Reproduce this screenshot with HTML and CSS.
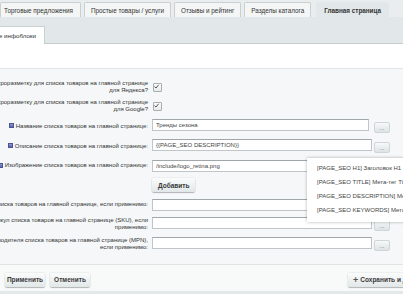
FILE: index.html
```html
<!DOCTYPE html>
<html lang="ru">
<head>
    <meta charset="UTF-8" />
    <meta name="viewport" content="width=device-width, initial-scale=1" />
    <title>Главная страница - настройки</title>
    <link rel="stylesheet" href="styles.css">
</head>
<body>
<div class="tabs">
    <div class="tab">Торговые предложения</div>
    <div class="tab">Простые товары / услуги</div>
    <div class="tab">Отзывы и рейтинг</div>
    <div class="tab">Разделы каталога</div>
    <div class="tab tab-ativa">Главная страница</div>
</div>
<div class="subtabs">
    <div class="subtab"><span>Связанные инфоблоки</span></div>
</div>
<div class="espaco"></div>

<div class="form">
    <div class="linha">
        <div class="rotulo"><span>Использовать микроразметку для списка товаров на главной странице<br>для Яндекса?</span></div>
        <div class="campo"><span class="check"><svg viewBox="0 0 7 7" width="7" height="7"><path d="M1.5 3.6 L3 5 L5.6 1.8" fill="none" stroke="#555" stroke-width="1"/></svg></span></div>
    </div>
    <div class="linha">
        <div class="rotulo"><span>Использовать микроразметку для списка товаров на главной странице<br>для Google?</span></div>
        <div class="campo"><span class="check"><svg viewBox="0 0 7 7" width="7" height="7"><path d="M1.5 3.6 L3 5 L5.6 1.8" fill="none" stroke="#555" stroke-width="1"/></svg></span></div>
    </div>
    <div class="linha">
        <div class="rotulo"><span><i class="dica"></i>Название списка товаров на главной странице:</span></div>
        <div class="campo">
            <div class="input input-curto">Тренды сезона</div>
            <button class="btn-mais">...</button>
        </div>
    </div>
    <div class="linha">
        <div class="rotulo"><span><i class="dica"></i>Описание списка товаров на главной странице:</span></div>
        <div class="campo">
            <div class="input">{{PAGE_SEO DESCRIPTION}}</div>
            <button class="btn-mais">...</button>
        </div>
    </div>
    <div class="linha">
        <div class="rotulo"><span><i class="dica"></i>Изображение списка товаров на главной странице:</span></div>
        <div class="campo">
            <div class="input">/include/logo_retina.png</div>
        </div>
    </div>
    <div class="linha">
        <div class="rotulo"></div>
        <div class="campo"><button class="btn">Добавить</button></div>
    </div>
    <div class="linha">
        <div class="rotulo"><span>Бренд списка товаров на главной странице, если применимо:</span></div>
        <div class="campo">
            <div class="input"></div>
        </div>
    </div>
    <div class="linha">
        <div class="rotulo"><span>Артикул списка товаров на главной странице (SKU), если<br>применимо:</span></div>
        <div class="campo">
            <div class="input"></div>
            <button class="btn-mais">...</button>
        </div>
    </div>
    <div class="linha">
        <div class="rotulo"><span>Код производителя списка товаров на главной странице (MPN),<br>если применимо:</span></div>
        <div class="campo">
            <div class="input"></div>
            <button class="btn-mais">...</button>
        </div>
    </div>
</div>

<div class="rodape">
    <div class="acoes">
        <button class="btn">Применить</button>
        <button class="btn">Отменить</button>
    </div>
    <button class="btn btn-salvar"><b class="mais">+</b>Сохранить и добавить</button>
</div>

<div class="menu">
    <div class="menu-item">[PAGE_SEO H1] Заголовок H1</div>
    <div class="menu-item">[PAGE_SEO TITLE] Мета-тег Title</div>
    <div class="menu-item">[PAGE_SEO DESCRIPTION] Мета-тег Description</div>
    <div class="menu-item">[PAGE_SEO KEYWORDS] Мета-тег Keywords</div>
</div>
</body>
</html>
```

FILE: styles.css
```css
:root {
    --cor-texto: #333;
    --cor-borda: #c9d0d2;
    --cor-faixa: #e9eded;
    --cor-faixa2: #e2e8e9;
    --cor-form: #f5f7f8;
}

html, body {
    margin: 0;
    width: 403px;
    height: 294px;
    overflow: hidden;
    font-family: 'Liberation Sans', Arial, sans-serif;
    color: var(--cor-texto);
    background: #fff;
    position: relative;
}

.tabs {
    display: flex;
    gap: 3px;
    height: 17px;
    padding-top: 2px;
    box-sizing: border-box;
    background: var(--cor-faixa);
    white-space: nowrap;
}

.tab {
    flex-shrink: 0;
    display: flex;
    align-items: center;
    padding: 0 7px 0 3px;
    height: 15px;
    font-size: 6.35px;
    background: #f4f6f6;
    border: 1px solid var(--cor-borda);
    border-bottom: none;
    border-radius: 2px 2px 0 0;
    box-sizing: border-box;
}

.tab:nth-child(2), .tab:nth-child(3), .tab:nth-child(4) {
    padding: 0 6px;
}

.tab-ativa {
    margin-left: 2px;
    background: var(--cor-faixa2);
    border-color: transparent;
    font-weight: bold;
    padding: 0 7px !important;
}

.subtabs {
    height: 27px;
    padding-top: 9px;
    box-sizing: border-box;
    background: var(--cor-faixa2);
    border-bottom: 1px solid #c6cdcf;
}

.subtab {
    width: 45px;
    height: 18px;
    display: flex;
    align-items: center;
    justify-content: flex-end;
    background: #fff;
    border: 1px solid var(--cor-borda);
    border-left: none;
    border-bottom: none;
    box-sizing: border-box;
    font-size: 6.2px;
    padding-right: 8px;
    white-space: nowrap;
}

.espaco {
    height: 24px;
    border-bottom: 1px solid #dfe4e6;
}

.form {
    background: var(--cor-form);
    padding-top: 11px;
    height: 195px;
    box-sizing: border-box;
    display: flex;
    flex-direction: column;
    gap: 5px;
    font-size: 6px;
}

.linha {
    display: flex;
    align-items: center;
    gap: 4px;
    min-height: 13px;
}

.linha:nth-child(n+3) {
    margin-top: 1px;
}

.rotulo {
    width: 148px;
    flex-shrink: 0;
    display: flex;
    justify-content: flex-end;
    text-align: right;
    line-height: 7px;
}

.rotulo span {
    white-space: nowrap;
    flex-shrink: 0;
}

.dica {
    display: inline-block;
    width: 5px;
    height: 5px;
    margin-right: 2px;
    vertical-align: -0.5px;
    background: linear-gradient(#8f98d0, #5a64a8);
    border: 1px solid #4b5596;
    box-sizing: border-box;
}

.campo {
    display: flex;
    align-items: flex-start;
    gap: 2px;
}

.check {
    display: block;
    width: 7px;
    height: 7px;
    margin: 1px 0 0 1px;
    border: 1px solid #a7aeb1;
    background: linear-gradient(#fdfdfd, #e6e9ea);
    border-radius: 1px;
}

.check svg {
    display: block;
    margin: -1px 0 0 -1px;
}

.input {
    width: 220px;
    height: 12px;
    box-sizing: border-box;
    background: #fff;
    border: 1px solid #bfc5c8;
    border-top-color: #9fa7aa;
    padding: 0 3px;
    line-height: 10px;
    font-size: 6px;
    color: #444;
    white-space: nowrap;
    overflow: hidden;
}

.input-curto {
    width: 217px;
    margin-right: 3px;
}

.btn-mais {
    margin-top: 3px;
    width: 16px;
    height: 11px;
    padding: 0;
    font-family: inherit;
    font-size: 6px;
    line-height: 6px;
    color: #666;
    background: linear-gradient(#f7f9f9, #dde3e4);
    border: 1px solid #cfd6d8;
    border-radius: 2px;
}

.btn {
    height: 14px;
    padding: 0 6px;
    font-family: inherit;
    font-size: 6.5px;
    font-weight: bold;
    color: #3a3a3a;
    background: linear-gradient(#fbfcfc, #e1e7e8);
    border: none;
    border-radius: 2px;
    box-shadow: 0 1px 1px rgba(0, 0, 0, 0.25), 0 0 0 1px rgba(0, 0, 0, 0.04);
    white-space: nowrap;
}

.rodape {
    height: 30px;
    box-sizing: border-box;
    border-top: 1px solid #dfe4e6;
    border-bottom: 3px solid #e3e8e9;
    background: #f8fafa;
    display: flex;
    align-items: center;
    justify-content: space-between;
    padding: 3px 0 0 5px;
}

.acoes {
    display: flex;
    gap: 5px;
}

.acoes .btn {
    width: 40px;
    padding: 0;
}

.btn-salvar {
    margin-right: -50px;
    width: 105px;
    text-align: left;
    padding-left: 5px;
}

.mais {
    color: #555;
    font-size: 9px;
    line-height: 6px;
    margin-right: 2px;
    vertical-align: -1px;
}

.menu {
    position: absolute;
    left: 307px;
    top: 158px;
    width: 130px;
    height: 64px;
    box-sizing: border-box;
    padding: 3px 0 0 10px;
    background: #fff;
    box-shadow: 0 0 3px rgba(0, 0, 0, 0.3);
    font-size: 6px;
    color: #444;
    white-space: nowrap;
}

.menu-item {
    height: 14px;
    line-height: 14px;
}
```
